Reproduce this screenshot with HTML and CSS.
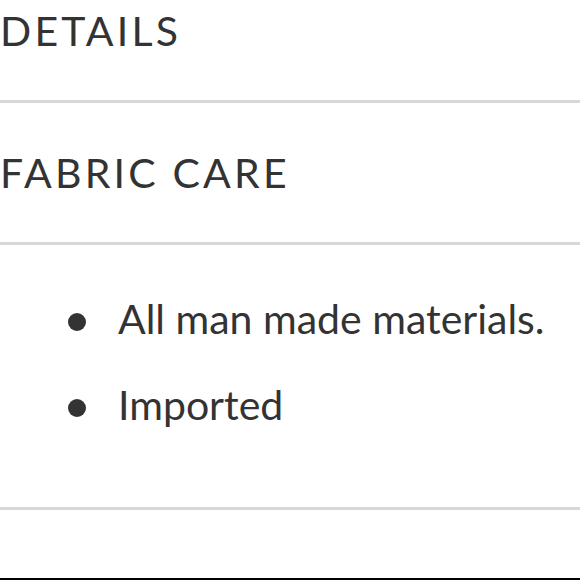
FILE: index.html
```html
<!DOCTYPE html>
<html>
<head>
<meta charset="utf-8">
<link rel="stylesheet" href="styles.css">
</head>
<body>
<div class="accordion">
  <div class="acc-head first">DETAILS</div>
  <div class="acc-head">FABRIC CARE</div>
  <div class="acc-body">
    <ul class="bullets">
      <li>All man made materials.</li>
      <li>Imported</li>
    </ul>
  </div>
  <div class="next"></div>
</div>
</body>
</html>
```
FILE: styles.css
```css
html, body {
  margin: 0;
  padding: 0;
  background: #ffffff;
}
body {
  font-family: Lato, "Open Sans", sans-serif;
  color: #333333;
  overflow: hidden;
}
.accordion {
  width: 580px;
}
.acc-head {
  font-size: 41px;
  line-height: 48px;
  letter-spacing: 3.2px;
  padding: 46px 0 45px 0;
  border-bottom: 3px solid #d8d8d8;
}
.acc-head.first {
  padding-top: 7px;
}
.acc-body {
  padding: 50px 0 78px 0;
  border-bottom: 3px solid #d8d8d8;
}
.bullets {
  list-style: none;
  margin: 0;
  padding: 0 0 0 68px;
  display: flex;
  flex-direction: column;
  gap: 38px;
}
.bullets li {
  display: flex;
  align-items: flex-start;
  font-size: 41px;
  line-height: 48px;
}
.bullets li::before {
  content: "";
  flex: none;
  width: 18px;
  height: 18px;
  border-radius: 50%;
  background: #333333;
  margin-top: 18px;
  margin-right: 32px;
}
.next {
  margin-top: 68px;
  border-top: 2px solid #000000;
}
```
